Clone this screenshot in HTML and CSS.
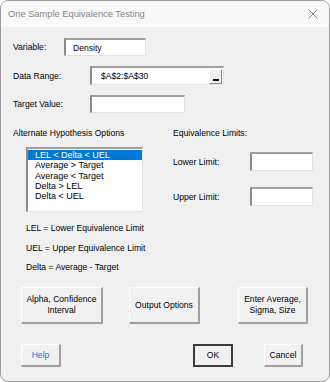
FILE: index.html
```html
<!DOCTYPE html>
<html lang="en">
<head>
    <meta charset="UTF-8">
    <meta name="viewport" content="width=device-width, initial-scale=1.0">
    <title>One Sample Equivalence Testing</title>
    <link rel="stylesheet" href="styles.css">
</head>
<body>
    <div class="dialog">
        <div class="titlebar">
            <span class="title">One Sample Equivalence Testing</span>
            <svg class="close" width="10" height="10" viewBox="0 0 10 10">
                <path d="M0.5 0.5 L9.5 9.5 M9.5 0.5 L0.5 9.5" stroke="#8a8a8a" stroke-width="1" fill="none"/>
            </svg>
        </div>

        <div class="content">
            <div class="row row-variable">
                <label class="label label-short">Variable:</label>
                <div class="field field-variable">Density</div>
            </div>

            <div class="row row-range">
                <label class="label label-long">Data Range:</label>
                <div class="field field-range">
                    <span>$A$2:$A$30</span>
                    <span class="picker"><span class="picker-bar"></span></span>
                </div>
            </div>

            <div class="row row-target">
                <label class="label label-long">Target Value:</label>
                <div class="field field-target"></div>
            </div>

            <div class="options">
                <div class="col-left">
                    <div class="heading">Alternate Hypothesis Options</div>
                    <ul class="listbox">
                        <li class="selected">LEL &lt; Delta &lt; UEL</li>
                        <li>Average &gt; Target</li>
                        <li>Average &lt; Target</li>
                        <li>Delta &gt; LEL</li>
                        <li>Delta &lt; UEL</li>
                    </ul>
                </div>
                <div class="col-right">
                    <div class="heading">Equivalence Limits:</div>
                    <div class="limit limit-lower">
                        <label class="label">Lower Limit:</label>
                        <div class="field field-limit"></div>
                    </div>
                    <div class="limit limit-upper">
                        <label class="label">Upper Limit:</label>
                        <div class="field field-limit"></div>
                    </div>
                </div>
            </div>

            <div class="notes">
                <div class="note">LEL = Lower Equivalence Limit</div>
                <div class="note">UEL = Upper Equivalence Limit</div>
                <div class="note">Delta = Average - Target</div>
            </div>

            <div class="actions">
                <button class="btn btn-alpha">Alpha, Confidence<br>Interval</button>
                <button class="btn btn-output">Output Options</button>
                <button class="btn btn-enter">Enter Average,<br>Sigma, Size</button>
            </div>

            <div class="footer">
                <button class="btn btn-small btn-help">Help</button>
                <button class="btn btn-small btn-ok">OK</button>
                <button class="btn btn-small btn-cancel">Cancel</button>
            </div>
        </div>
    </div>
</body>
</html>
```

FILE: styles.css
```css
* {
    box-sizing: border-box;
}
body {
    margin: 0;
    padding: 0;
    background-color: #ffffff;
    font-family: "Liberation Sans", Arial, sans-serif;
    font-size: 8.6px;
    color: #000;
}
.dialog {
    width: 330px;
    height: 382px;
    border: 1px solid #9d9d9d;
    border-radius: 8px;
    overflow: hidden;
    background-color: #f0f0f0;
    display: flex;
    flex-direction: column;
}
.titlebar {
    height: 26px;
    background-color: #f9f9f9;
    display: flex;
    align-items: center;
    justify-content: space-between;
    padding: 0 11px 0 7px;
}
.title {
    font-size: 9.3px;
    color: #858585;
}
.close {
    display: block;
}
.content {
    flex: 1;
    padding-left: 12px;
}
.row {
    display: flex;
    align-items: center;
}
.label {
    display: block;
}
.label-short {
    width: 51px;
}
.label-long {
    width: 77px;
}
.row-variable {
    margin-top: 11px;
}
.row-range {
    margin-top: 10px;
}
.row-target {
    margin-top: 10px;
}
.field {
    background: #fff;
    border-top: 2px solid #a0a0a0;
    border-left: 2px solid #8c8c8c;
    border-right: 1px solid #e3e3e3;
    border-bottom: 1px solid #e3e3e3;
    height: 18px;
    display: flex;
    align-items: center;
    padding-left: 7px;
}
.field-variable {
    width: 82px;
}
.field-range {
    width: 134px;
    height: 19px;
    padding-left: 9px;
    justify-content: space-between;
    padding-right: 1px;
}
.picker {
    width: 13px;
    height: 15px;
    background: #f0f0f0;
    border-top: 1px solid #fff;
    border-left: 1px solid #fff;
    border-right: 1px solid #8a8a8a;
    border-bottom: 1px solid #8a8a8a;
    display: flex;
    align-items: flex-end;
    justify-content: center;
    padding-bottom: 2px;
}
.picker-bar {
    width: 6px;
    height: 2px;
    background: #111;
}
.field-target {
    width: 95px;
}
.options {
    display: flex;
    margin-top: 14px;
}
.heading {
    height: 12px;
    line-height: 12px;
}
.col-left {
    width: 160px;
}
.col-right {
    width: 145px;
}
.listbox {
    list-style: none;
    margin: 8px 0 0 13px;
    padding: 1px 0 0 0;
    width: 117px;
    height: 65px;
    background: #fff;
    border-top: 2px solid #a0a0a0;
    border-left: 2px solid #8c8c8c;
    border-right: 1px solid #e3e3e3;
    border-bottom: 1px solid #e3e3e3;
}
.listbox li {
    height: 10.3px;
    line-height: 10.3px;
    padding-left: 7px;
    font-size: 9px;
}
.listbox li.selected {
    background: #0078d7;
    color: #fff;
}
.limit {
    display: flex;
    align-items: center;
}
.limit .label {
    width: 77px;
}
.limit-lower {
    margin-top: 13px;
}
.limit-upper {
    margin-top: 16px;
}
.field-limit {
    width: 63px;
    height: 19px;
}
.notes {
    margin-top: 10px;
    padding-left: 13px;
    display: flex;
    flex-direction: column;
    gap: 7.5px;
}
.note {
    height: 12px;
    line-height: 12px;
}
.actions {
    display: flex;
    margin-top: 14px;
    height: 37px;
}
.btn {
    font-family: "Liberation Sans", Arial, sans-serif;
    font-size: 8.6px;
    color: #000;
    background: #f1f1f1;
    border-top: 1px solid #fdfdfd;
    border-left: 1px solid #fdfdfd;
    border-right: 2px solid #a0a0a0;
    border-bottom: 2px solid #a0a0a0;
    padding: 0;
    line-height: 11px;
    text-align: center;
}
.btn-alpha {
    margin-left: 8px;
    width: 82px;
}
.btn-output {
    margin-left: 26px;
    width: 71px;
}
.btn-enter {
    margin-left: 38px;
    width: 70px;
}
.footer {
    display: flex;
    margin-top: 20px;
    height: 23px;
}
.btn-small {
    height: 23px;
    width: 40px;
}
.btn-help {
    margin-left: 8px;
    color: #1a73e0;
}
.btn-ok {
    margin-left: 132px;
    border: 2px solid #3c3c3c;
    background: #f1f1f1;
}
.btn-cancel {
    margin-left: 31px;
    width: 39px;
}
```
